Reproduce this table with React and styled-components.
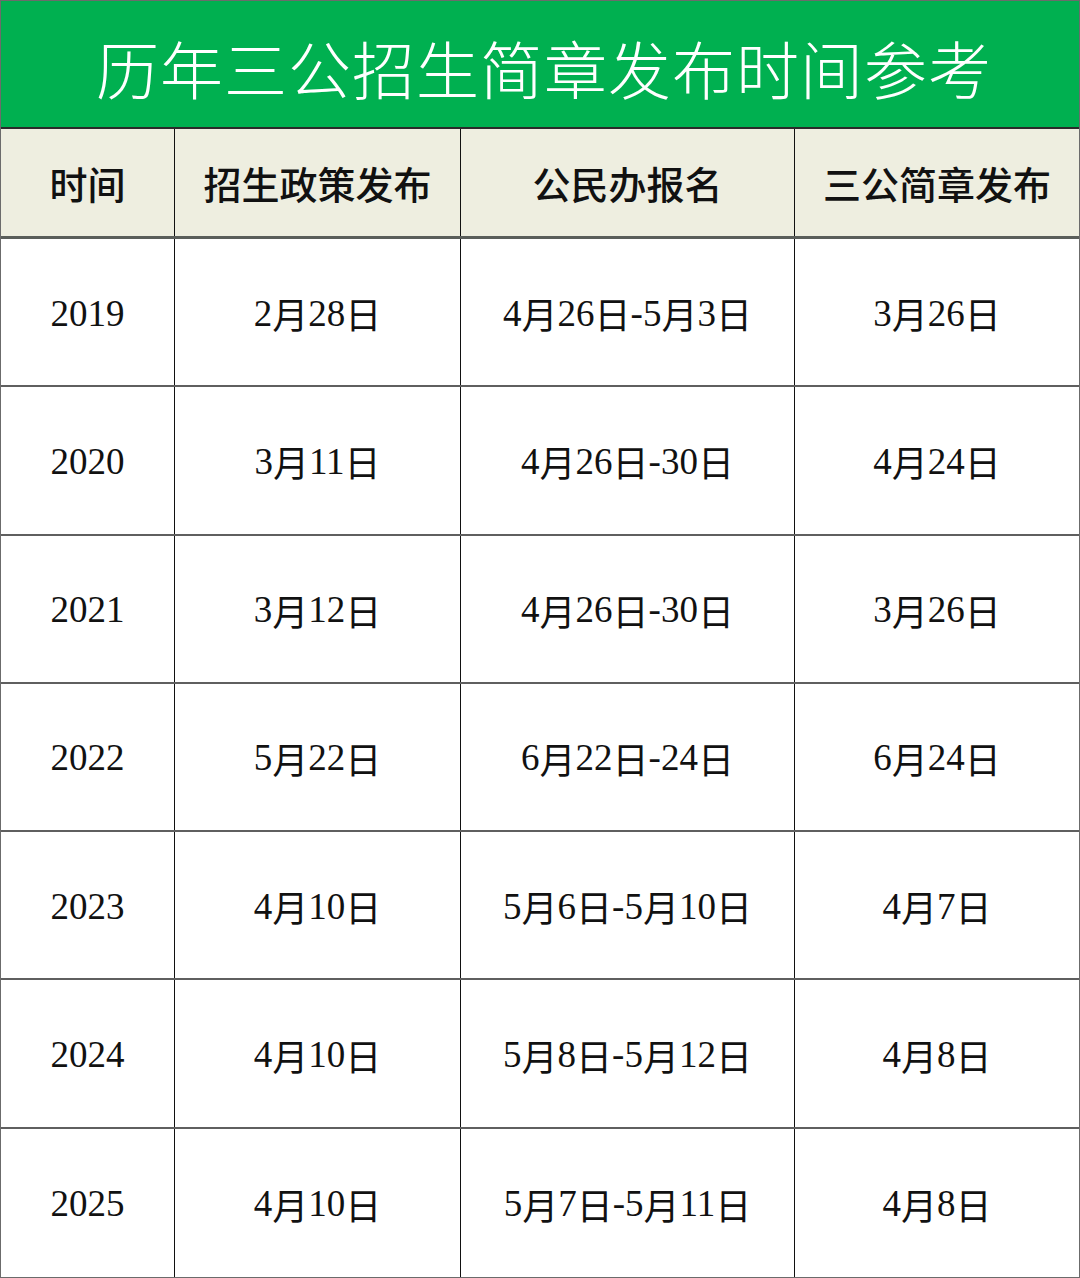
import React from "react";
import styled, { createGlobalStyle } from "styled-components";

const Global = createGlobalStyle`
  html, body { margin: 0; padding: 0; background: #fff; }
  * { box-sizing: border-box; }
`;

const Sheet = styled.div`
  width: 1080px;
  height: 1278px;
  display: grid;
  grid-template-rows: 128px 110px repeat(7, 1fr);
  border: 1px solid #6b6b6b;
  font-family: "Liberation Serif", serif;
  color: #111;
`;

const Title = styled.div`
  background: #00b050;
  color: #fff;
  display: flex;
  align-items: center;
  justify-content: center;
  font-family: "Noto Sans CJK SC", sans-serif;
  font-weight: 300;
  font-size: 63px;
  letter-spacing: 1px;
  border-bottom: 2px solid #2a2a2a;
  padding-top: 4px;
  padding-left: 8px;
`;

const Row = styled.div`
  display: grid;
  grid-template-columns: 174px 286px 334px 1fr;
  background: ${(p) => (p.$head ? "#eeeee0" : "#fff")};
  border-bottom: ${(p) => (p.$last ? "none" : p.$head ? "3px solid #5a5e5a" : "2px solid #5f5f5f")};
`;

const Cell = styled.div`
  display: flex;
  align-items: center;
  justify-content: center;
  border-right: ${(p) => (p.$end ? "none" : "1.5px solid #111")};
  font-size: ${(p) => (p.$head ? "38px" : "36px")};
  font-family: ${(p) => (p.$head ? '"Noto Sans CJK SC", sans-serif' : '"Liberation Serif", serif')};
  font-weight: ${(p) => (p.$head ? 500 : 400)};
  padding-top: ${(p) => (p.$head ? "0" : "2px")};
  white-space: nowrap;
`;

const Num = styled.span`
  font-family: "Liberation Serif", serif;
  font-size: 37px;
`;

const Han = styled.span`
  font-family: "Noto Sans CJK SC", sans-serif;
  font-weight: 400;
  font-size: 36px;
`;

const headers = ["时间", "招生政策发布", "公民办报名", "三公简章发布"];
const rows = [
  ["2019", "2月28日", "4月26日-5月3日", "3月26日"],
  ["2020", "3月11日", "4月26日-30日", "4月24日"],
  ["2021", "3月12日", "4月26日-30日", "3月26日"],
  ["2022", "5月22日", "6月22日-24日", "6月24日"],
  ["2023", "4月10日", "5月6日-5月10日", "4月7日"],
  ["2024", "4月10日", "5月8日-5月12日", "4月8日"],
  ["2025", "4月10日", "5月7日-5月11日", "4月8日"],
];

function Mixed({ text }) {
  const parts = text.split(/([月日])/).filter(Boolean);
  return parts.map((p, i) =>
    p === "月" || p === "日" ? <Han key={i}>{p}</Han> : <Num key={i}>{p}</Num>
  );
}

export default function App() {
  return (
    <>
      <Global />
      <Sheet>
        <Title>历年三公招生简章发布时间参考</Title>
        <Row $head>
          {headers.map((h, i) => (
            <Cell key={h} $head $end={i === 3}>
              {h}
            </Cell>
          ))}
        </Row>
        {rows.map((r, ri) => (
          <Row key={r[0]} $last={ri === rows.length - 1}>
            {r.map((c, i) => (
              <Cell key={i} $end={i === 3}>
                <Mixed text={c} />
              </Cell>
            ))}
          </Row>
        ))}
      </Sheet>
    </>
  );
}
